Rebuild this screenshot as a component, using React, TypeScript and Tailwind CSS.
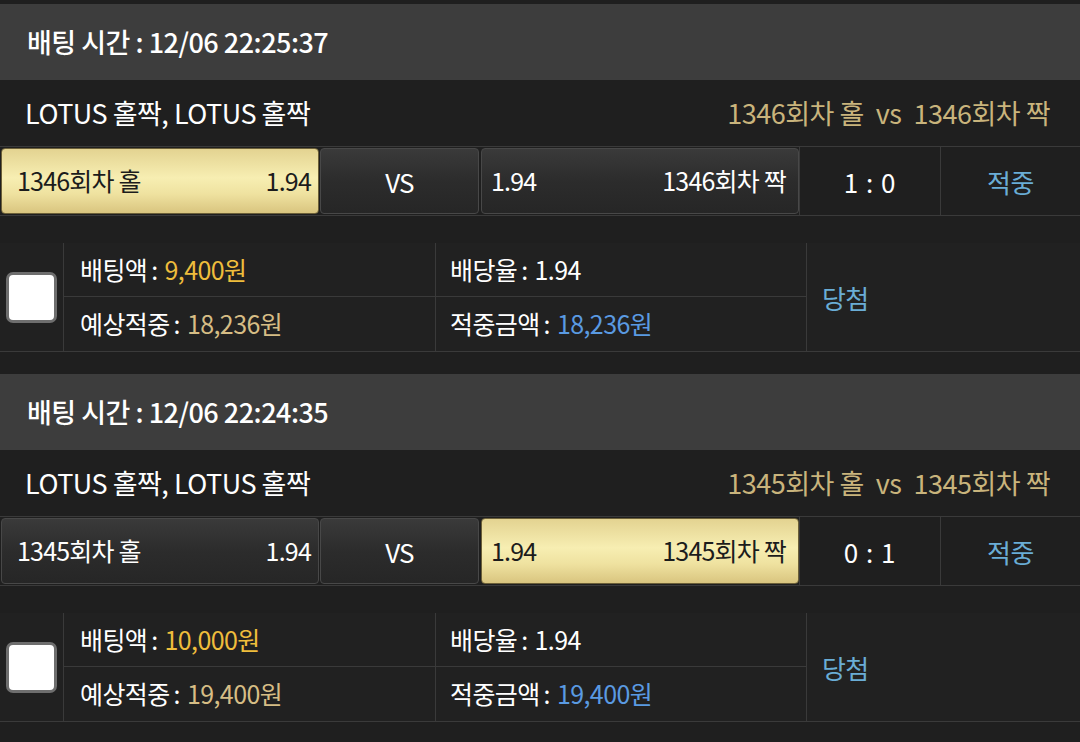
import React from "react";

type Bet = {
  time: string;
  round: string;
  pick: "home" | "away";
  score: string;
  amount: string;
  expected: string;
  win: string;
};

const bets: Bet[] = [
  { time: "12/06 22:25:37", round: "1346", pick: "home", score: "1 : 0", amount: "9,400원", expected: "18,236원", win: "18,236원" },
  { time: "12/06 22:24:35", round: "1345", pick: "away", score: "0 : 1", amount: "10,000원", expected: "19,400원", win: "19,400원" },
];

const yellow =
  "bg-[linear-gradient(to_bottom,#e3d391_0%,#f7eeb2_45%,#efe2a0_70%,#d9c57f_100%)] border border-[#6b5f38] text-[#1c1c1c]";
const dark =
  "bg-[linear-gradient(to_bottom,#3a3a3a_0%,#2c2c2c_50%,#262626_100%)] border border-[#484848] text-white";

function Field({ label, value, color }: { label: string; value: string; color: string }) {
  return (
    <span className="whitespace-nowrap">
      {label}
      <span className="ml-[4px] mr-[7px]">:</span>
      <span className={color}>{value}</span>
    </span>
  );
}

function Block({ b }: { b: Bet }) {
  return (
    <div className="flex flex-col">
      <div className="h-[76px] bg-[#3d3d3d] flex items-center pl-[27px] text-white font-medium">
        배팅 시간 : {b.time}
      </div>
      <div className="h-[66px] bg-[#1f1f1f] flex items-center justify-between pl-[25px] pr-[30px]">
        <span className="text-white">LOTUS 홀짝, LOTUS 홀짝</span>
        <span className="text-[#c9b47c]">
          {b.round}회차 홀<span className="mx-[12px]">vs</span>
          {b.round}회차 짝
        </span>
      </div>
      <div className="h-[70px] bg-[#1f1f1f] border-t border-b border-[#3a3a3a] flex items-center">
        <div className="pl-[1px] flex items-center h-full py-[1px] text-[25px] tracking-[-0.8px]">
          <div className={`w-[318px] h-full rounded-[4px] flex items-center justify-between pl-[15px] pr-[7px] ${b.pick === "home" ? yellow : dark}`}>
            <span>{b.round}회차 홀</span>
            <span>1.94</span>
          </div>
          <div className={`ml-[1px] w-[159px] h-full rounded-[4px] flex items-center justify-center text-[26px] ${dark}`}>VS</div>
          <div className={`ml-[2px] w-[318px] h-full rounded-[4px] flex items-center justify-between pl-[9px] pr-[12px] ${b.pick === "away" ? yellow : dark}`}>
            <span>1.94</span>
            <span>{b.round}회차 짝</span>
          </div>
        </div>
        <div className="w-[141px] h-full border-l border-[#3a3a3a] flex items-center justify-center text-white tracking-[1px] text-[26px]">{b.score}</div>
        <div className="flex-1 h-full border-l border-[#3a3a3a] flex items-center justify-center text-[#6aadd6] text-[26px]">적중</div>
      </div>
      <div className="h-[27px] bg-[#1f1f1f]" />
      <div className="h-[109px] bg-[#212121] flex border-b border-[#3a3a3a] text-[25px] tracking-[-0.6px]">
        <div className="w-[63px] flex items-center justify-start pl-[6px]">
          <div className="w-[51px] h-[51px] bg-white border-[3px] border-[#6e6e6e] rounded-[7px]" />
        </div>
        <div className="w-[743px] border-l border-[#3a3a3a] grid grid-cols-[371px_1fr] grid-rows-2 text-white">
          <div className="flex items-center pl-[16px] border-b border-[#3a3a3a]">
            <Field label="배팅액" value={b.amount} color="text-[#efbd3c]" />
          </div>
          <div className="flex items-center pl-[14px] border-b border-l border-[#3a3a3a]">
            <Field label="배당율" value="1.94" color="text-white" />
          </div>
          <div className="flex items-center pl-[16px]">
            <Field label="예상적중" value={b.expected} color="text-[#d6bd85]" />
          </div>
          <div className="flex items-center pl-[14px] border-l border-[#3a3a3a]">
            <Field label="적중금액" value={b.win} color="text-[#5a9ae2]" />
          </div>
        </div>
        <div className="flex-1 border-l border-[#3a3a3a] flex items-center pl-[15px] text-[#6aadd6] text-[26px]">당첨</div>
      </div>
      <div className="h-[22px] bg-[#1f1f1f]" />
    </div>
  );
}

export default function App() {
  return (
    <div
      className="w-[1080px] h-[742px] overflow-hidden bg-[#1f1f1f] pt-[4px] text-[27px] tracking-[-0.5px]"
      style={{ fontFamily: '"Noto Sans CJK KR", "Noto Sans", sans-serif' }}
    >
      {bets.map((b) => (
        <Block key={b.time} b={b} />
      ))}
    </div>
  );
}
